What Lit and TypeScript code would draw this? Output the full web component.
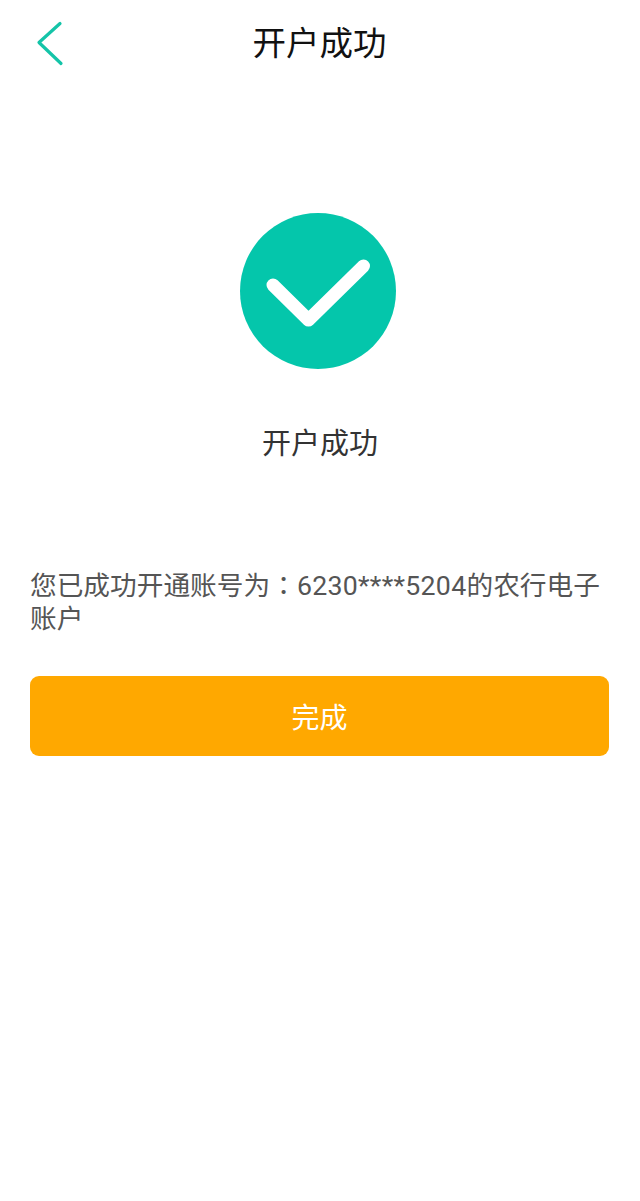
import { LitElement, html, css } from "lit";
import { customElement } from "lit/decorators.js";

@customElement("app-root")
export class AppRoot extends LitElement {
  static styles = css`
    :host {
      display: block;
      width: 640px;
      height: 1201px;
      background: #fff;
      font-family: "Roboto", "Noto Sans CJK SC", sans-serif;
      overflow: hidden;
    }
    .bar {
      height: 88px;
      display: grid;
      grid-template-columns: 1fr auto 1fr;
      align-items: center;
    }
    .back {
      display: block;
      width: 28px;
      height: 48px;
      margin-left: 36px;
    }
    .bar-title {
      font-size: 33.500px;
      line-height: 44px;
      color: #111;
      margin-right: 1px;
    }
    .hero {
      display: flex;
      flex-direction: column;
      align-items: center;
      padding-top: 125px;
    }
    .hero-icon {
      display: block;
      width: 156px;
      height: 156px;
      margin-right: 4px;
    }
    .hero-title {
      margin-top: 55px;
      font-size: 29px;
      line-height: 40px;
      color: #333;
    }
    .message {
      margin: 106px 30px 0;
      font-size: 26.700px;
      line-height: 33px;
      color: #555;
    }
    .colon {
      font-family: "Noto Sans CJK TC", sans-serif;
      line-height: 0;
    }
    .digits {
      letter-spacing: 0.300px;
    }
    .done {
      display: flex;
      align-items: center;
      justify-content: center;
      margin: 40px 31px 0 30px;
      height: 80px;
      border-radius: 9px;
      background: #ffa800;
      color: #fff;
      font-size: 28px;
    }
  `;

  render() {
    return html`
      <div class="bar">
        <svg class="back" viewBox="0 0 28 48" fill="none">
          <path d="M24 3.500L3 22.500L25 43.500" stroke="#14c4a8" stroke-width="3.200" stroke-linecap="round" stroke-linejoin="round" />
        </svg>
        <div class="bar-title">开户成功</div>
        <div></div>
      </div>
      <div class="hero">
        <svg class="hero-icon" viewBox="0 0 156 156">
          <circle cx="78" cy="78" r="78" fill="#04c6ab" />
          <path d="M33 72L68.500 107L123.500 53" fill="none" stroke="#fff" stroke-width="13" stroke-linecap="round" stroke-linejoin="round" />
        </svg>
        <div class="hero-title">开户成功</div>
      </div>
      <div class="message">您已成功开通账号为<span class="colon">：</span><span class="digits">6230****5204</span>的农行电子<br />账户</div>
      <div class="done">完成</div>
    `;
  }
}
